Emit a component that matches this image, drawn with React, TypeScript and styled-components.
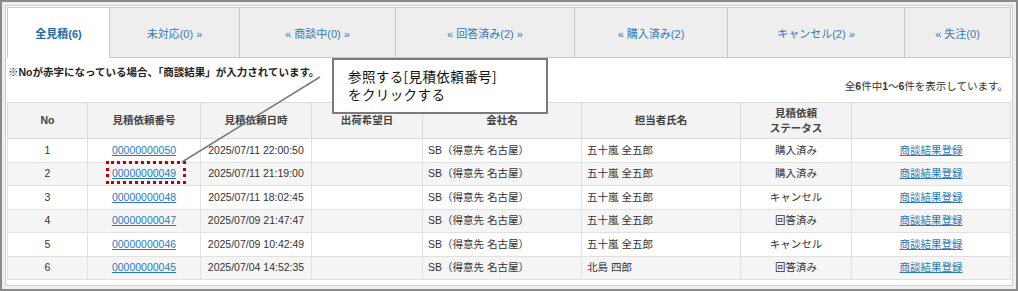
import * as React from 'react';
import styled, { createGlobalStyle } from 'styled-components';

const GlobalStyle = createGlobalStyle`
  html, body {
    margin: 0;
    padding: 0;
    background: #ffffff;
  }
  body {
    font-family: "Liberation Sans", "Noto Sans CJK JP", sans-serif;
  }
`;

const Page = styled.div`
  position: relative;
  width: 1018px;
  height: 291px;
`;

const Frame = styled.div`
  box-sizing: border-box;
  height: 100%;
  border: 2px solid #8a8a8a;
  padding: 3px;
  background: #efefef;
`;

const Panel = styled.div`
  box-sizing: border-box;
  height: 100%;
  border: 1px solid #cfcfcf;
  background: #ffffff;
  padding: 1px 0 0 1px;
`;

const TabBar = styled.div`
  display: flex;
  width: 1004px;
`;

const Tab = styled.div<{ $active?: boolean; $width: number; $first?: boolean }>`
  box-sizing: border-box;
  width: ${(p) => p.$width}px;
  height: 51px;
  display: flex;
  align-items: center;
  justify-content: center;
  font-size: 11px;
  color: ${(p) => (p.$active ? '#1f6aa5' : '#337ab7')};
  font-weight: ${(p) => (p.$active ? 'bold' : 'normal')};
  background: ${(p) => (p.$active ? '#ffffff' : '#eeeeee')};
  border-top: 1px solid #c8c8c8;
  border-right: 1px solid #c8c8c8;
  border-left: ${(p) => (p.$first ? '1px solid #c8c8c8' : 'none')};
  border-bottom: 1px solid ${(p) => (p.$active ? '#ffffff' : '#c8c8c8')};
`;

const InfoBar = styled.div`
  width: 1004px;
  padding: 7px 0 9px 1px;
  font-size: 10.5px;
  line-height: 14px;
  color: #222;
`;

const Notice = styled.p`
  margin: 0;
  font-weight: bold;
`;

const Count = styled.p`
  margin: 0;
  padding-right: 4px;
  text-align: right;
  color: #333;
`;

const Table = styled.table`
  border-collapse: collapse;
  table-layout: fixed;
  width: 1004px;
  font-size: 10.5px;
  color: #333;
`;

const Th = styled.th`
  height: 35px;
  padding: 0 4px;
  border: 1px solid #dcdcdc;
  background: #f3f3f3;
  color: #444;
  font-weight: bold;
  line-height: 15px;
  text-align: center;
`;

const Row = styled.tr<{ $striped?: boolean }>`
  height: 23.5px;
  background: ${(p) => (p.$striped ? '#f5f5f5' : '#ffffff')};
`;

const Td = styled.td<{ $align?: 'left' | 'center' }>`
  padding: 0 5px;
  border: 1px solid #e0e0e0;
  text-align: ${(p) => p.$align || 'center'};
  line-height: 15px;
  white-space: nowrap;
`;

const Link = styled.a`
  color: #2b7bb9;
  text-decoration: underline;
`;

const Highlight = styled.span`
  position: relative;
  &::after {
    content: '';
    position: absolute;
    left: -6px;
    right: -10px;
    top: -6px;
    bottom: -5px;
    border: 3px dotted #c00000;
  }
`;

const Callout = styled.div`
  position: absolute;
  left: 332px;
  top: 58px;
  box-sizing: border-box;
  width: 216px;
  height: 56px;
  padding: 7px 0 0 14px;
  border: 2px solid #7a7a7a;
  background: #ffffff;
  font-family: "Noto Sans CJK JP", sans-serif;
  font-size: 13.5px;
  line-height: 18px;
  letter-spacing: 0.4px;
  color: #111;
`;

const CalloutLine = styled.div`
  height: 18px;
  overflow: visible;
  white-space: nowrap;
`;

const Connector = styled.svg`
  position: absolute;
  left: 0;
  top: 0;
  pointer-events: none;
`;

const tabs = [
  { label: '全見積(6)', width: 103, active: true },
  { label: '未対応(0) »', width: 130 },
  { label: '« 商談中(0) »', width: 156 },
  { label: '« 回答済み(2) »', width: 179 },
  { label: '« 購入済み(2)', width: 153 },
  { label: 'キャンセル(2) »', width: 177 },
  { label: '« 失注(0)', width: 106 },
];

const colWidths = [80, 113, 111, 111, 159, 159, 111, 159];

const rows = [
  { no: 1, id: '00000000050', date: '2025/07/11 22:00:50', person: '五十嵐 全五郎', status: '購入済み' },
  { no: 2, id: '00000000049', date: '2025/07/11 21:19:00', person: '五十嵐 全五郎', status: '購入済み' },
  { no: 3, id: '00000000048', date: '2025/07/11 18:02:45', person: '五十嵐 全五郎', status: 'キャンセル' },
  { no: 4, id: '00000000047', date: '2025/07/09 21:47:47', person: '五十嵐 全五郎', status: '回答済み' },
  { no: 5, id: '00000000046', date: '2025/07/09 10:42:49', person: '五十嵐 全五郎', status: 'キャンセル' },
  { no: 6, id: '00000000045', date: '2025/07/04 14:52:35', person: '北島 四郎', status: '回答済み' },
];

export default function App() {
  return (
    <Page>
      <GlobalStyle />
      <Frame>
        <Panel>
          <TabBar>
            {tabs.map((t, i) => (
              <Tab key={t.label} $active={t.active} $width={t.width} $first={i === 0}>
                {t.label}
              </Tab>
            ))}
          </TabBar>
          <InfoBar>
            <Notice>※Noが赤字になっている場合、「商談結果」が入力されています。</Notice>
            <Count>
              全<b>6</b>件中<b>1</b>～<b>6</b>件を表示しています。
            </Count>
          </InfoBar>
          <Table>
            <colgroup>
              {colWidths.map((w, i) => (
                <col key={i} style={{ width: w }} />
              ))}
            </colgroup>
            <thead>
              <tr>
                <Th>No</Th>
                <Th>見積依頼番号</Th>
                <Th>見積依頼日時</Th>
                <Th>出荷希望日</Th>
                <Th>会社名</Th>
                <Th>担当者氏名</Th>
                <Th>
                  見積依頼
                  <br />
                  ステータス
                </Th>
                <Th />
              </tr>
            </thead>
            <tbody>
              {rows.map((r, i) => (
                <Row key={r.id} $striped={i % 2 === 1}>
                  <Td>{r.no}</Td>
                  <Td>
                    {r.no === 2 ? (
                      <Highlight>
                        <Link href="#">{r.id}</Link>
                      </Highlight>
                    ) : (
                      <Link href="#">{r.id}</Link>
                    )}
                  </Td>
                  <Td>{r.date}</Td>
                  <Td />
                  <Td $align="left">SB（得意先 名古屋）</Td>
                  <Td $align="left">{r.person}</Td>
                  <Td>{r.status}</Td>
                  <Td>
                    <Link href="#">商談結果登録</Link>
                  </Td>
                </Row>
              ))}
            </tbody>
          </Table>
        </Panel>
      </Frame>
      <Connector width={1018} height={291}>
        <line x1={320} y1={77} x2={182} y2={162} stroke="#7a7a7a" strokeWidth={1.6} />
      </Connector>
      <Callout>
        <CalloutLine>参照する[見積依頼番号]</CalloutLine>
        <CalloutLine>をクリックする</CalloutLine>
      </Callout>
    </Page>
  );
}
